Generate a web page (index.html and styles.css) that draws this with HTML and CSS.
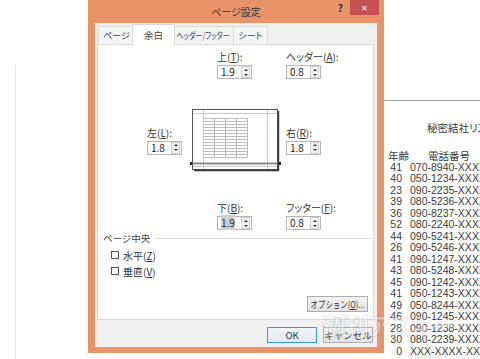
FILE: index.html
```html
<!DOCTYPE html>
<html lang="ja">
<head>
  <meta charset="UTF-8">
  <title>ページ設定</title>
  <link rel="stylesheet" href="styles.css">
</head>
<body>
  <div class="desk">
    <div class="sheet-left"></div>
    <div class="sheet-right">
      <div class="doc-title">秘密結社リスト</div>
      <div class="doc-table">
        <div class="doc-head">年齢</div><div class="doc-head phone-head">電話番号</div>
        <div class="age">41</div><div>070-8940-XXXX</div>
        <div class="age">40</div><div>050-1234-XXXX</div>
        <div class="age">23</div><div>090-2235-XXXX</div>
        <div class="age">39</div><div>080-5236-XXXX</div>
        <div class="age">36</div><div>090-8237-XXXX</div>
        <div class="age">52</div><div>080-2240-XXXX</div>
        <div class="age">44</div><div>090-5241-XXXX</div>
        <div class="age">26</div><div>090-5246-XXXX</div>
        <div class="age">41</div><div>090-1247-XXXX</div>
        <div class="age">43</div><div>080-5248-XXXX</div>
        <div class="age">45</div><div>090-1242-XXXX</div>
        <div class="age">41</div><div>050-1243-XXXX</div>
        <div class="age">49</div><div>050-8244-XXXX</div>
        <div class="age">46</div><div>090-1245-XXXX</div>
        <div class="age">28</div><div>090-1238-XXXX</div>
        <div class="age">30</div><div>080-2239-XXXX</div>
        <div class="age">0</div><div>XXX-XXXX-XXXX</div>
      </div>
    </div>
  </div>

  <div class="dialog">
    <div class="titlebar">
      <div></div>
      <div class="title">ページ設定</div>
      <div class="controls">
        <span class="help">?</span>
        <span class="close">✕</span>
      </div>
    </div>

    <div class="client">
      <div class="tabs">
        <div class="tab w1">ページ</div>
        <div class="tab w2 active">余白</div>
        <div class="tab w3"><span class="squeeze">ヘッダー/フッター</span></div>
        <div class="tab w4">シート</div>
      </div>

      <div class="panel">
        <div class="margins">
          <div></div>
          <div class="field shift">
            <label>上(<u>T</u>):</label>
            <div class="spin"><span class="val">1.9</span><span class="arrows"><i class="up"></i><i class="down"></i></span></div>
          </div>
          <div class="field">
            <label>ヘッダー(<u>A</u>):</label>
            <div class="spin"><span class="val">0.8</span><span class="arrows"><i class="up"></i><i class="down"></i></span></div>
          </div>

          <div class="field middle">
            <label>左(<u>L</u>):</label>
            <div class="spin"><span class="val">1.8</span><span class="arrows"><i class="up"></i><i class="down"></i></span></div>
          </div>
          <svg class="preview" width="91" height="63" viewBox="0 0 91 63">
            <rect x="2.5" y="0.5" width="85" height="60" fill="#fff" stroke="#555"/>
            <path d="M88.5 2 V62 M4 61.5 H89" stroke="#333" stroke-width="1.4"/>
            <path d="M13.5 1 V60 M77.5 1 V60 M3 4.5 H87 M3 57.5 H87" stroke="#c9c9c9"/>
            <path d="M13.5 9.5 H57.5 M13.5 12.5 H57.5 M13.5 15.5 H57.5 M13.5 18.5 H57.5 M13.5 21.5 H57.5 M13.5 24.5 H57.5 M13.5 27.5 H57.5 M13.5 30.5 H57.5 M13.5 33.5 H57.5 M13.5 36.5 H57.5 M13.5 39.5 H57.5 M13.5 42.5 H57.5 M13.5 45.5 H57.5 M13.5 48.5 H57.5 M24.5 9.5 V48.5 M35.5 9.5 V48.5 M46.5 9.5 V48.5 M57.5 9.5 V48.5" stroke="#bcbcbc"/>
            <path d="M3 54.5 H87" stroke="#8a8a8a" stroke-width="2"/>
            <rect x="0" y="53" width="2" height="3" fill="#222"/>
            <rect x="89" y="53" width="2" height="3" fill="#222"/>
          </svg>
          <div class="field middle">
            <label>右(<u>R</u>):</label>
            <div class="spin"><span class="val">1.8</span><span class="arrows"><i class="up"></i><i class="down"></i></span></div>
          </div>

          <div></div>
          <div class="field shift">
            <label>下(<u>B</u>):</label>
            <div class="spin"><span class="val"><span class="sel">1.9</span></span><span class="arrows"><i class="up"></i><i class="down"></i></span></div>
          </div>
          <div class="field">
            <label>フッター(<u>F</u>):</label>
            <div class="spin"><span class="val">0.8</span><span class="arrows"><i class="up"></i><i class="down"></i></span></div>
          </div>
        </div>

        <div class="group">
          <span>ページ中央</span>
          <span class="rule"></span>
        </div>
        <div class="checks">
          <label><span class="box"></span>水平(<u>Z</u>)</label>
          <label><span class="box"></span>垂直(<u>V</u>)</label>
        </div>

        <button class="btn options"><span class="squeeze">オプション(<u>O</u>)...</span></button>
      </div>

      <div class="buttons">
        <button class="btn default">OK</button>
        <button class="btn">キャンセル</button>
      </div>
    </div>
  </div>

  <div class="watermark">週刊アスキー</div>
</body>
</html>
```

FILE: styles.css
```css
body {
  margin: 0;
  width: 480px;
  height: 359px;
  overflow: hidden;
  position: relative;
  background: #fff;
  font-family: "Noto Sans CJK JP", "Liberation Sans", sans-serif;
  font-feature-settings: "palt";
  color: #333;
}

/* background worksheet */
.desk {
  display: flex;
  height: 359px;
}

.sheet-left {
  width: 368px;
  margin: 65px 0 0 15px;
  border-left: 1px solid #e4e4e4;
}

.sheet-right {
  flex: 1;
  margin-top: 100px;
  border-top: 1px solid #a4a4a4;
  padding: 21px 0 0 4px;
  font-family: "Liberation Sans", "Noto Sans CJK JP", sans-serif;
  font-size: 10.5px;
  line-height: 11.5px;
  color: #3a3a3a;
  white-space: nowrap;
  overflow: hidden;
}

.doc-title {
  padding-left: 39px;
  font-family: "Noto Sans CJK JP", sans-serif;
  font-size: 10.5px;
}

.doc-table {
  display: grid;
  grid-template-columns: 14px 1fr;
  column-gap: 8px;
  margin-top: 16.5px;
}

.doc-head {
  font-family: "Noto Sans CJK JP", sans-serif;
}

.phone-head {
  padding-left: 18px;
}

.age {
  text-align: right;
}

/* dialog window */
.dialog {
  position: absolute;
  left: 88px;
  top: 0;
  width: 296px;
  height: 353px;
  background: #e9936b;
  display: flex;
  flex-direction: column;
}

.titlebar {
  height: 23px;
  display: grid;
  grid-template-columns: 1fr auto 1fr;
}

.title {
  align-self: center;
  font-size: 10px;
  line-height: 12px;
  color: #333;
}

.controls {
  justify-self: end;
  display: flex;
  align-items: flex-start;
  margin-right: 5px;
}

.help {
  font-size: 10px;
  font-weight: bold;
  line-height: 12px;
  margin: 2px 7px 0 0;
  color: #3a2a20;
}

.close {
  width: 29px;
  height: 15px;
  background: #c75050;
  color: #fff;
  font-size: 8px;
  display: flex;
  align-items: center;
  justify-content: center;
}

.client {
  flex: 1;
  margin: 0 7px 6px 7px;
  background: #f0f0f0;
  padding: 3px 3px 0 2px;
  display: flex;
  flex-direction: column;
}

.tabs {
  display: flex;
  height: 18px;
  padding-left: 1px;
}

.tab {
  box-sizing: border-box;
  height: 18px;
  border: 1px solid #d9d9d9;
  border-bottom: none;
  margin-right: -1px;
  background: #f4f4f4;
  font-size: 9px;
  line-height: 12px;
  color: #444;
  white-space: nowrap;
  display: flex;
  align-items: center;
  justify-content: center;
}

.squeeze {
  display: inline-block;
  transform: scaleX(0.78);
}

.w1 { width: 37px; }
.w2 { width: 39px; }
.w3 { width: 62px; }
.w4 { width: 35px; }

.tab.active {
  position: relative;
  z-index: 1;
  height: 21px;
  width: 43px;
  margin: -2px -3px 0 -2px;
  background: #fff;
  padding-bottom: 1px;
  font-size: 9.5px;
}

.panel {
  box-sizing: border-box;
  height: 276px;
  border: 1px solid #d9d9d9;
  background: #fff;
  display: flex;
  flex-direction: column;
}

.margins {
  display: grid;
  grid-template-columns: 36px 103px 36px;
  row-gap: 30px;
  padding: 6px 0 0 49px;
}

.field {
  display: flex;
  flex-direction: column;
  gap: 2px;
}

.field label {
  font-size: 10px;
  line-height: 12px;
  white-space: nowrap;
  color: #333;
}

.shift {
  margin-left: 34px;
}

.middle {
  align-self: center;
}

.spin {
  box-sizing: border-box;
  width: 35px;
  height: 14px;
  border: 1px solid #b4b6bc;
  background: #fff;
  display: flex;
  align-items: center;
}

.val {
  flex: 1;
  padding-left: 3px;
  font-size: 10px;
  line-height: 12px;
  color: #222;
}

.sel {
  background: #cfcfcf;
}

.arrows {
  box-sizing: border-box;
  width: 9px;
  height: 12px;
  margin-right: 1px;
  border: 1px solid #cfcfcf;
  background: #f2f2f2;
  display: flex;
  flex-direction: column;
  align-items: center;
  justify-content: space-around;
}

.arrows i {
  width: 0;
  height: 0;
  border-left: 2px solid transparent;
  border-right: 2px solid transparent;
}

.arrows .up { border-bottom: 2px solid #333; }
.arrows .down { border-top: 2px solid #333; }

.preview {
  margin-left: 7px;
  display: block;
}

.group {
  display: flex;
  align-items: center;
  gap: 4px;
  margin: 2px 1px 0 5px;
  font-size: 9.5px;
  line-height: 12px;
  color: #444;
}

.rule {
  flex: 1;
  height: 1px;
  background: #dcdcdc;
}

.checks {
  display: flex;
  flex-direction: column;
  padding-left: 13px;
  margin-top: 3px;
}

.checks label {
  display: flex;
  align-items: center;
  height: 16px;
  font-size: 10px;
  color: #333;
}

.box {
  box-sizing: border-box;
  width: 8px;
  height: 8px;
  border: 1px solid #555;
  background: #fff;
  margin-right: 4px;
}

.btn {
  box-sizing: border-box;
  height: 16px;
  padding: 0;
  border: 1px solid #adadad;
  background: linear-gradient(#f2f2f2, #e3e3e3);
  font-family: inherit;
  font-size: 9.5px;
  line-height: 12px;
  color: #333;
  white-space: nowrap;
  display: flex;
  align-items: center;
  justify-content: center;
}

.options {
  align-self: flex-end;
  margin: auto 5px 7px 0;
  width: 61px;
  font-size: 9.5px;
}

.buttons {
  display: flex;
  justify-content: flex-end;
  gap: 6px;
  margin-top: 7px;
  padding-right: 1px;
}

.buttons .btn {
  width: 50px;
}

.btn.default {
  border-color: #3399ff;
  background: linear-gradient(#eef4fa, #e3e9ef);
}

/* faint watermark over the screenshot */
.watermark {
  position: absolute;
  left: 322px;
  top: 310px;
  font-size: 24px;
  font-weight: bold;
  line-height: 30px;
  letter-spacing: -1px;
  color: rgba(255, 255, 255, 0.4);
  -webkit-text-stroke: 0.7px rgba(120, 120, 120, 0.3);
}
```
